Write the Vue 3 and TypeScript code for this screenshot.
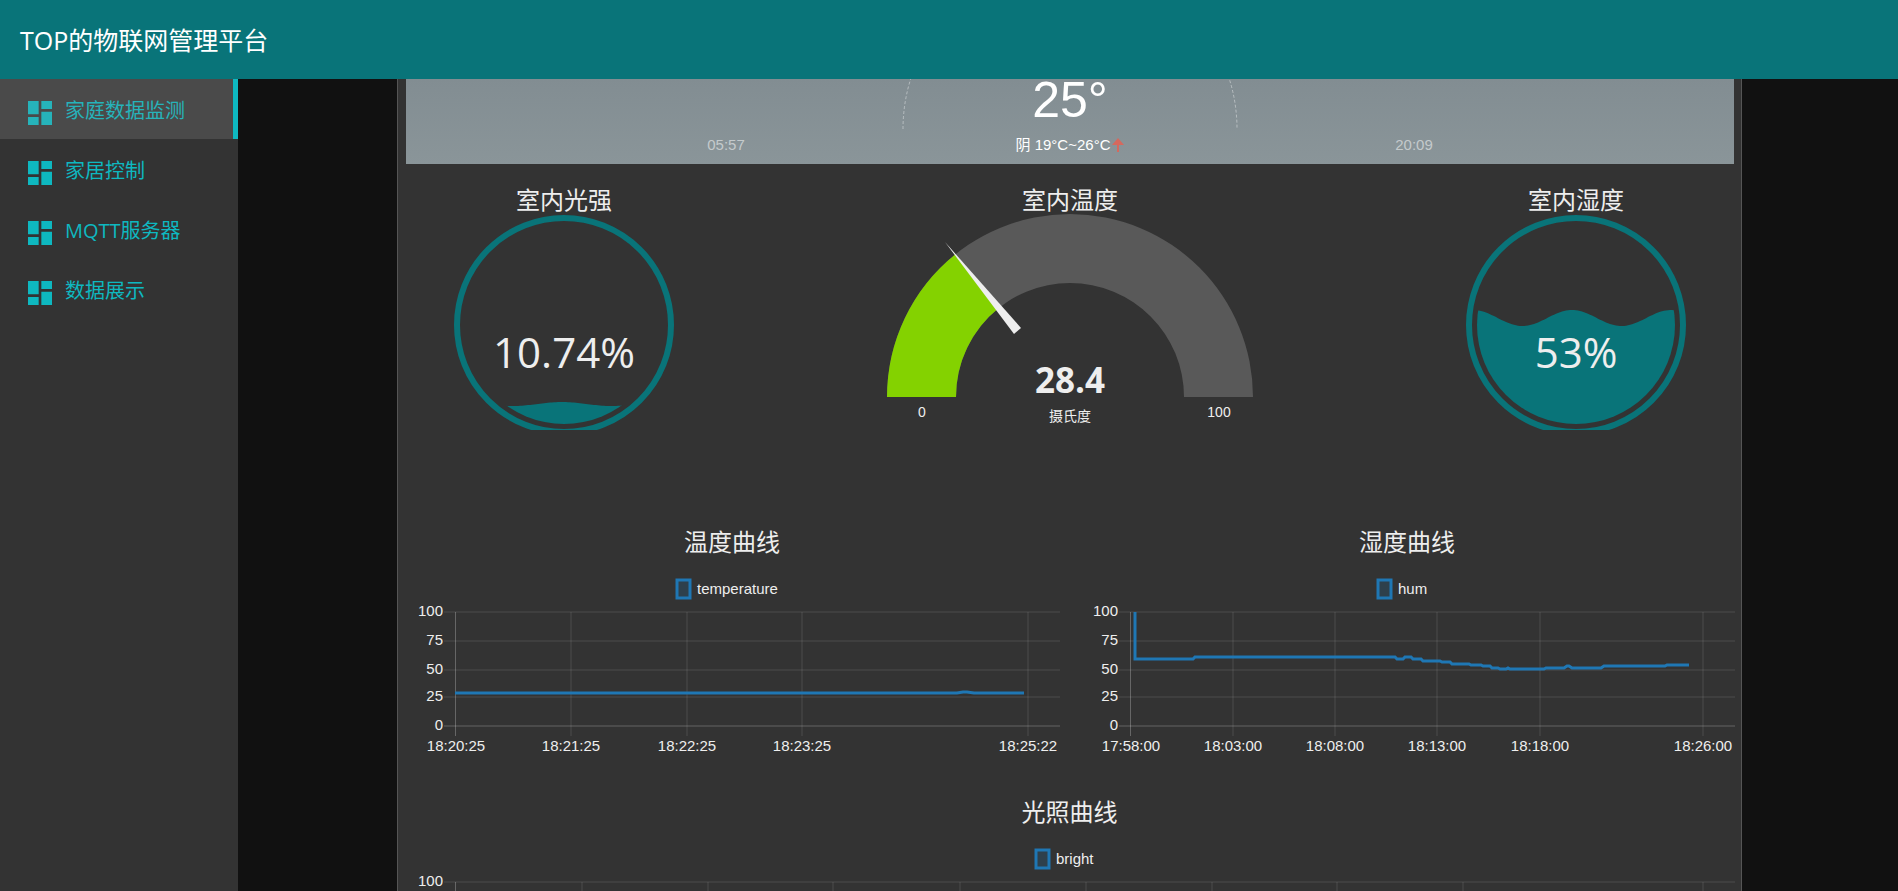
<script setup lang="ts">
interface Point { x: number; y: number }
interface Tick { x: number; label: string }
interface Chart {
  title: string
  series: string
  width: number
  legendX: number
  levels: Level[]
  ticks: Tick[]
  points: Point[]
}
interface Level { y: number; label: string }
interface Liquid {
  id: string
  title: string
  text: string
  level: number
  amplitude: number
  crest: number
}

const menu: string[] = ['家庭数据监测', '家居控制', 'MQTT服务器', '数据展示']

const liquids: Record<'light' | 'humidity', Liquid> = {
  light: { id: 'light', title: '室内光强', text: '10.74%', level: 190, amplitude: 2, crest: 156 },
  humidity: { id: 'humidity', title: '室内湿度', text: '53%', level: 104, amplitude: 8, crest: 154 },
}

// Sine surface closed along the bottom; the circle clip trims it to the tank.
function wave(l: Liquid): string {
  const steps: string[] = []
  for (let x = 56; x <= 260; x += 2) {
    const y = l.level - l.amplitude * Math.cos((2 * Math.PI * (x - l.crest)) / 99)
    steps.push(`${x},${y.toFixed(2)}`)
  }
  return `M${steps.join('L')}L260,216L56,216Z`
}

// Ring sector of the half-circle meter, fractions measured from the left end.
function sector(from: number, to: number): string {
  const at = (r: number, f: number): string =>
    `${(183 - r * Math.cos(Math.PI * f)).toFixed(2)},${(183 - r * Math.sin(Math.PI * f)).toFixed(2)}`
  return `M${at(183, from)}A183,183 0 0 1 ${at(183, to)}L${at(114, to)}A114,114 0 0 0 ${at(114, from)}Z`
}

const levels: Level[] = [
  { y: 53, label: '100' },
  { y: 82, label: '75' },
  { y: 111, label: '50' },
  { y: 138, label: '25' },
  { y: 167, label: '0' },
]

const pairs = (list: number[][]): Point[] => list.map(([x, y]) => ({ x, y }))

const charts: Chart[] = [
  {
    title: '温度曲线', series: 'temperature', width: 656, legendX: 273, levels,
    ticks: [
      { x: 52, label: '18:20:25' },
      { x: 167, label: '18:21:25' },
      { x: 283, label: '18:22:25' },
      { x: 398, label: '18:23:25' },
      { x: 624, label: '18:25:22' },
    ],
    points: pairs([[51, 134], [553, 134], [559, 133], [563, 133], [570, 134], [620, 134]]),
  },
  {
    title: '湿度曲线', series: 'hum', width: 656, legendX: 299, levels,
    ticks: [
      { x: 52, label: '17:58:00' },
      { x: 154, label: '18:03:00' },
      { x: 256, label: '18:08:00' },
      { x: 358, label: '18:13:00' },
      { x: 461, label: '18:18:00' },
      { x: 624, label: '18:26:00' },
    ],
    points: pairs([
      [56, 53], [56, 100], [114, 100], [116, 98], [316, 98], [318, 100], [324, 100], [326, 98],
      [332, 98], [334, 100], [342, 100], [344, 102], [361, 102], [363, 103], [371, 103], [373, 105],
      [390, 105], [392, 106], [402, 106], [404, 107], [411, 107], [413, 109], [419, 109], [421, 110],
      [427, 110], [429, 109], [431, 110], [465, 110], [467, 109], [485, 109], [488, 107], [490, 107],
      [493, 109], [522, 109], [525, 107], [586, 107], [588, 106], [610, 106],
    ]),
  },
  {
    title: '光照曲线', series: 'bright', width: 1331, legendX: 632, levels: levels.slice(0, 1),
    ticks: [52, 178, 304, 429, 556, 682, 808, 933, 1059, 1299].map((x) => ({ x, label: '' })),
    points: [],
  },
]

const line = (c: Chart): string => c.points.map((p) => `${p.x},${p.y}`).join(' ')
</script>

<template>
  <div class="page">
    <header class="topbar"><h1>TOP的物联网管理平台</h1></header>
    <div class="body">
      <nav class="side">
        <a v-for="(item, i) in menu" :key="item" href="#" class="item" :class="{ active: i === 0 }">
          <svg class="icon" viewBox="0 0 24 24" aria-hidden="true">
            <path d="M3 13h8V3H3v10zm0 8h8v-6H3v6zm10 0h8V11h-8v10zm0-18v6h8V3h-8z" />
          </svg>
          <span>{{ item }}</span>
        </a>
      </nav>

      <main class="content">
        <div class="card">
          <section class="weather">
            <svg class="arc" viewBox="0 0 336 50" aria-hidden="true">
              <path d="M1 50A167 167 0 0 1 335 50" />
            </svg>
            <div class="temp">25°</div>
            <div class="info">
              <span class="sun">05:57</span>
              <span class="range">
                <span>阴 19°C~26°C</span>
                <svg class="up" viewBox="0 0 12 14" aria-hidden="true"><path d="M6 0L12 7H7V14H5V7H0Z" /></svg>
              </span>
              <span class="sun">20:09</span>
            </div>
          </section>

          <section class="gauges">
            <figure class="gauge">
              <figcaption>{{ liquids.light.title }}</figcaption>
              <svg class="liquid" viewBox="0 0 316 216">
                <clipPath id="tank"><circle cx="158" cy="111" r="99" /></clipPath>
                <circle class="ring" cx="158" cy="111" r="107" />
                <path class="water" :d="wave(liquids.light)" clip-path="url(#tank)" />
                <text class="big" x="158" y="154">{{ liquids.light.text }}</text>
              </svg>
            </figure>

            <figure class="gauge">
              <figcaption>室内温度</figcaption>
              <svg class="meter" viewBox="0 0 366 216">
                <path class="track" :d="sector(0, 1)" />
                <path class="level" :d="sector(0, 0.284)" />
                <path class="needle" d="M58 28L127 120L134 114Z" />
                <text class="value" x="183" y="179">28.4</text>
                <text class="unit" x="183" y="207">摄氏度</text>
                <text class="bound" x="35" y="203">0</text>
                <text class="bound" x="332" y="203">100</text>
              </svg>
            </figure>

            <figure class="gauge">
              <figcaption>{{ liquids.humidity.title }}</figcaption>
              <svg class="liquid" viewBox="0 0 316 216">
                <circle class="ring" cx="158" cy="111" r="107" />
                <path class="water" :d="wave(liquids.humidity)" clip-path="url(#tank)" />
                <text class="big" x="158" y="154">{{ liquids.humidity.text }}</text>
              </svg>
            </figure>
          </section>

          <section class="charts">
            <figure v-for="c in charts" :key="c.series" class="chart" :class="{ wide: c.width > 1000 }">
              <figcaption>{{ c.title }}</figcaption>
              <svg :viewBox="`0 0 ${c.width} 208`">
                <rect class="key" :x="c.legendX" y="21" width="13" height="18" />
                <text class="label" :x="c.legendX + 20" y="35">{{ c.series }}</text>
                <g v-for="t in c.levels" :key="t.label">
                  <rect class="grid" :class="{ zero: t.label === '0' }" x="40" :y="t.y - 1" :width="c.width - 40" height="2" />
                  <text class="label end" x="39" :y="t.y + 4">{{ t.label }}</text>
                </g>
                <g v-for="(t, i) in c.ticks" :key="t.x">
                  <rect class="grid" :class="{ axis: i === 0 }" :x="t.x - 1" y="53" :width="i === 0 ? 1 : 2" height="124" />
                  <text v-if="t.label" class="label mid" :x="t.x" y="192">{{ t.label }}</text>
                </g>
                <polyline v-if="c.points.length" class="line" :points="line(c)" />
              </svg>
            </figure>
          </section>
        </div>
      </main>
    </div>
  </div>
</template>

<style>
body {
  margin: 0;
  background: #111;
}
</style>

<style scoped>
.page {
  height: 100vh;
  display: flex;
  flex-direction: column;
  overflow: hidden;
  background: #111;
  color: #eee;
  font-family: "Open Sans", "Noto Sans CJK SC", sans-serif;
}
.topbar {
  flex: none;
  height: 79px;
  display: flex;
  align-items: center;
  padding: 0 20px;
  background: #097479;
  color: #fff;
}
h1 {
  margin: 0;
  font-size: 25px;
  line-height: 32px;
  font-weight: 400;
}
.body {
  flex: 1;
  min-height: 0;
  display: flex;
}
.side {
  flex: none;
  width: 238px;
  background: #333;
}
.item {
  box-sizing: border-box;
  height: 60px;
  display: flex;
  align-items: center;
  gap: 9px;
  padding: 0 0 0 24px;
  color: #0eb8c0;
  font-size: 20px;
  text-decoration: none;
}
.item.active {
  background: #4a4a4a;
  border-right: 5px solid #0eb8c0;
  color: #26b3ba;
}
.icon {
  width: 32px;
  height: 32px;
  margin-top: 8px;
  fill: currentColor;
}
.content {
  flex: 1;
  min-width: 0;
  padding: 0 156px 0 159px;
  overflow: hidden;
}
.card {
  border: 1px solid #555;
  border-width: 0 1px;
  background: #333;
}
.weather {
  position: relative;
  margin: 0 7px 0 8px;
  padding-bottom: 9px;
  background: linear-gradient(#828d92, #8a9599);
  color: #fff;
  font-family: "Liberation Sans", "Noto Sans CJK SC", sans-serif;
  text-align: center;
}
.arc {
  position: absolute;
  top: 0;
  left: 50%;
  width: 336px;
  height: 50px;
  margin-left: -168px;
}
.arc path {
  fill: none;
  stroke: #fff;
  stroke-opacity: 0.4;
  stroke-dasharray: 3 2;
}
.temp {
  font-size: 50px;
  line-height: 42px;
}
.info {
  display: grid;
  grid-template-columns: repeat(3, 344px);
  justify-content: center;
  margin-top: 14px;
  font-size: 15px;
  line-height: 20px;
}
.sun {
  color: #c4cacc;
}
.range {
  display: flex;
  justify-content: center;
  align-items: center;
  gap: 2px;
  white-space: nowrap;
}
.up {
  width: 12px;
  height: 14px;
  fill: #d5695e;
}
figure {
  margin: 0;
}
figcaption {
  font-size: 24px;
  text-align: center;
}
.gauges {
  display: flex;
  justify-content: space-between;
  margin: 23px 7px 0 8px;
}
.gauge figcaption {
  line-height: 26px;
  padding-bottom: 1px;
}
.gauge svg {
  display: block;
  height: 216px;
}
.liquid {
  width: 316px;
}
.meter {
  width: 366px;
}
.ring {
  fill: none;
  stroke: #097479;
  stroke-width: 6;
}
.water {
  fill: #097479;
}
.big,
.value,
.unit,
.bound,
.mid {
  text-anchor: middle;
}
.big,
.value,
.unit,
.bound,
.needle {
  fill: #eee;
}
.big {
  font-size: 42px;
}
.track {
  fill: #595959;
}
.level {
  fill: #84d200;
}
.value {
  font-size: 35px;
  font-weight: 700;
}
.unit {
  font-size: 14px;
}
.bound {
  font-family: "Liberation Sans", sans-serif;
  font-size: 14px;
}
.charts {
  display: grid;
  grid-template-columns: 1fr 1fr;
  gap: 30px 19px;
  margin: 96px 6px 0;
}
.chart.wide {
  grid-column: 1 / -1;
}
.chart figcaption {
  line-height: 32px;
  padding-bottom: 1px;
  margin-bottom: 0;
}
.chart svg {
  display: block;
  width: 100%;
  margin-bottom: -1px;
}
.label {
  fill: #eee;
  font-family: "Liberation Sans", sans-serif;
  font-size: 15px;
}
.end {
  text-anchor: end;
}
.key {
  fill: rgba(31, 119, 180, 0.2);
  stroke: #1f77b4;
  stroke-width: 3;
}
.grid {
  fill: #fff;
  fill-opacity: 0.06;
}
.zero {
  fill-opacity: 0.12;
}
.axis {
  fill-opacity: 0.25;
}
.line {
  fill: none;
  stroke: #1f77b4;
  stroke-width: 3;
}
</style>
